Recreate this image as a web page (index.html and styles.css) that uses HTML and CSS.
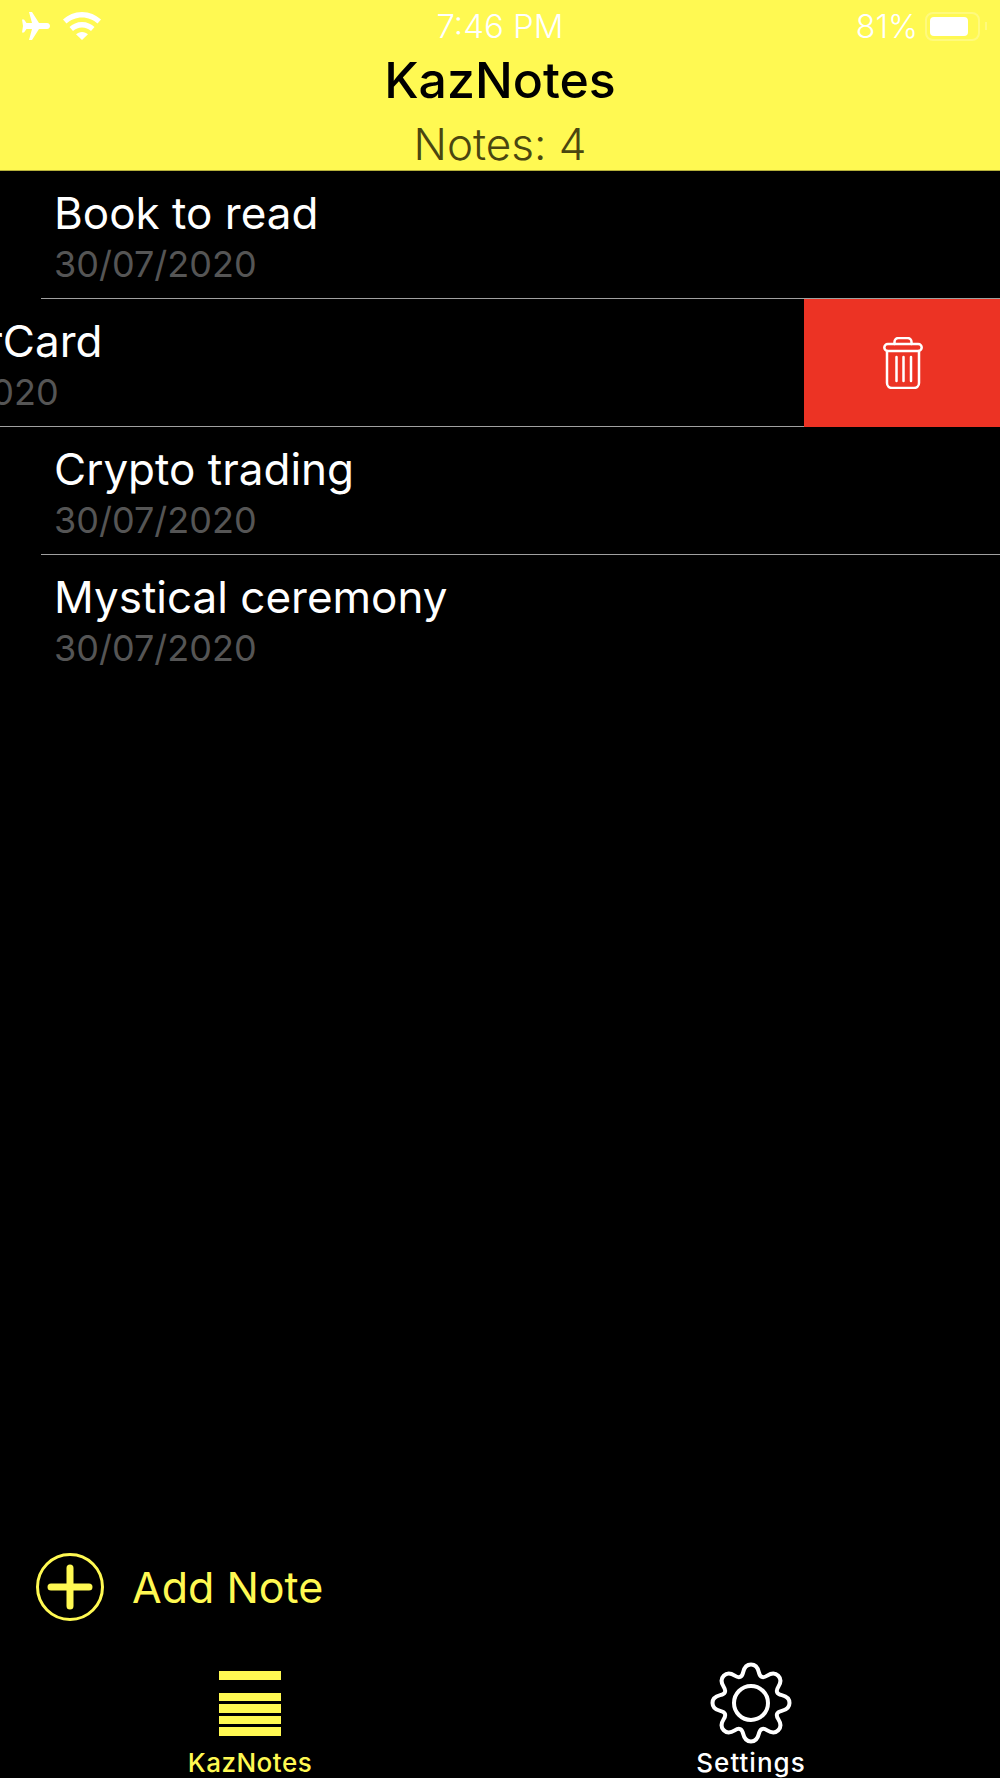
FILE: index.html
```html
<!DOCTYPE html>
<html lang="en">
<head>
    <meta charset="UTF-8">
    <meta name="viewport" content="width=device-width, initial-scale=1.0">
    <title>KazNotes</title>
    <link rel="stylesheet" href="styles.css">
</head>
<body>
    <header class="top">
        <div class="status-bar">
            <div class="status-left">
                <svg class="icon-plane" viewBox="0 0 28 28" fill="#fff"><path d="M7 0h3l7 11h8c2 0 3 1.500 3 3s-1 3-3 3h-8L10 28H7l3-11H4.500L2 20.500H0L1 14 0 7.500h2L4.500 11H10z"/></svg>
                <svg class="icon-wifi" viewBox="0 0 38 28" fill="#fff"><path d="M19 0c7.500 0 14 3 19 7.500l-3.500 4C30.500 8 25 5.500 19 5.500S7.500 8 3.500 11.500L0 7.500C5 3 11.500 0 19 0z"/><path d="M19 10c5 0 9.500 2 12.500 5l-3.500 4c-2.500-2.300-5.500-3.500-9-3.500s-6.500 1.200-9 3.500l-3.500-4C9.500 12 14 10 19 10z"/><path d="M19 20c2.500 0 4.500 1 6 2.300L19 28l-6-5.700C14.500 21 16.500 20 19 20z"/></svg>
            </div>
            <div class="status-time">7:46 PM</div>
            <div class="status-right">
                <span class="battery-pct">81%</span>
                <div class="battery"><div class="battery-fill"></div></div>
                <div class="battery-nub"></div>
            </div>
        </div>
        <h1>KazNotes</h1>
        <p class="count">Notes: 4</p>
    </header>

    <main class="notes">
        <div class="note">
            <div class="note-title">Book to read</div>
            <div class="note-date">30/07/2020</div>
        </div>
        <div class="note note-swiped">
            <div class="note-body">
                <div class="note-title">MasterCard</div>
                <div class="note-date">30/07/2020</div>
            </div>
            <div class="delete">
                <svg class="icon-trash" viewBox="0 0 40 52" fill="none" stroke="#fff" stroke-width="2.500" stroke-linejoin="round" stroke-linecap="round">
                    <path d="M11.500 7V5a4 4 0 0 1 4-4h9a4 4 0 0 1 4 4v2"/>
                    <rect x="1.300" y="7" width="37.400" height="7" rx="3.500"/>
                    <path d="M4 14v32a5 5 0 0 0 5 5h22a5 5 0 0 0 5-5V14"/>
                    <path d="M13.500 20v24M20.500 20v24M28 20v24"/>
                </svg>
            </div>
        </div>
        <div class="note">
            <div class="note-title">Crypto trading</div>
            <div class="note-date">30/07/2020</div>
        </div>
        <div class="note note-last">
            <div class="note-title">Mystical ceremony</div>
            <div class="note-date">30/07/2020</div>
        </div>
    </main>

    <div class="add-note">
        <svg class="icon-add" viewBox="0 0 70 70" fill="none" stroke="#fff952">
            <circle cx="35" cy="35" r="32.500" stroke-width="3"/>
            <path d="M35 16v38M16 35h38" stroke-width="7" stroke-linecap="round"/>
        </svg>
        <span>Add Note</span>
    </div>

    <nav class="tabs">
        <div class="tab tab-active">
            <div class="bars">
                <div class="bar bar-first"></div>
                <div class="bar"></div>
                <div class="bar"></div>
                <div class="bar"></div>
                <div class="bar"></div>
            </div>
            <span class="tab-label">KazNotes</span>
        </div>
        <div class="tab tab-settings">
            <svg class="icon-gear" viewBox="-41 -41 82 82" fill="none" stroke="#fff" stroke-width="4">
                <path d="M0 -38.500Q6.100 -38.500 7.850 -30.800Q9.600 -23.100 16.250 -27.350Q22.900 -31.600 27.250 -27.250Q31.600 -22.900 27.350 -16.250Q23.100 -9.600 30.800 -7.850Q38.500 -6.100 38.500 0Q38.500 6.100 30.800 7.850Q23.100 9.600 27.350 16.250Q31.600 22.900 27.250 27.250Q22.900 31.600 16.250 27.350Q9.600 23.100 7.850 30.800Q6.100 38.500 0 38.500Q-6.100 38.500 -7.850 30.800Q-9.600 23.100 -16.250 27.350Q-22.900 31.600 -27.250 27.250Q-31.600 22.900 -27.350 16.250Q-23.100 9.600 -30.800 7.850Q-38.500 6.100 -38.500 0Q-38.500 -6.100 -30.800 -7.850Q-23.100 -9.600 -27.350 -16.250Q-31.600 -22.900 -27.250 -27.250Q-22.900 -31.600 -16.250 -27.350Q-9.600 -23.100 -7.850 -30.800Q-6.100 -38.500 0 -38.500Z"/>
                <circle cx="0" cy="0" r="17"/>
            </svg>
            <span class="tab-label">Settings</span>
        </div>
    </nav>
</body>
</html>
```

FILE: styles.css
```css
* {
    box-sizing: border-box;
}
body {
    font-family: Inter, "Liberation Sans", sans-serif;
    margin: 0;
    height: 1778px;
    overflow: hidden;
    background-color: #000;
    color: #fff;
    display: flex;
    flex-direction: column;
}

/* top yellow area */
.top {
    height: 171px;
    flex-shrink: 0;
    background-color: #fff952;
    border-bottom: 1px solid #b5b03a;
    text-align: center;
    color: #000;
}
.status-bar {
    height: 50px;
    padding: 2px 13px 0 22px;
    display: flex;
    align-items: center;
    justify-content: space-between;
    position: relative;
    color: #fff;
}
.status-left {
    display: flex;
    align-items: center;
    gap: 13px;
}
.icon-plane {
    width: 28px;
    height: 28px;
}
.icon-wifi {
    width: 38px;
    height: 28px;
}
.status-time {
    position: absolute;
    left: 0;
    right: 0;
    font-size: 33px;
    font-weight: 300;
    line-height: 50px;
    text-align: center;
}
.status-right {
    display: flex;
    align-items: center;
}
.battery-pct {
    font-size: 32px;
    font-weight: 300;
    margin-right: 7px;
}
.battery {
    width: 55px;
    height: 29px;
    padding: 3px;
    border: 2px solid rgba(255, 255, 255, 0.25);
    border-radius: 8px;
}
.battery-fill {
    width: 38px;
    height: 100%;
    background-color: #fff;
    border-radius: 4px;
}
.battery-nub {
    width: 2px;
    height: 8px;
    margin-left: 5px;
    background-color: rgba(255, 255, 255, 0.25);
}
h1 {
    margin: 0;
    font-size: 50px;
    font-weight: 500;
    line-height: 60px;
}
.count {
    margin: 10px 0 0;
    font-size: 44px;
    font-weight: 350;
    line-height: 48px;
    color: #4a4610;
}

/* notes list */
.notes {
    flex: 1;
    overflow: hidden;
}
.note {
    height: 128px;
    margin-left: 41px;
    padding: 17px 0 0 13px;
    border-bottom: 1px solid #a0a0a0;
}
.note-last {
    border-bottom: none;
}
.note-title {
    font-size: 44px;
    line-height: 51px;
    white-space: nowrap;
}
.note-date {
    font-size: 36px;
    line-height: 50px;
    color: #555;
    white-space: nowrap;
}
.note-swiped {
    margin-left: 0;
    padding: 0;
    border-bottom: none;
    display: flex;
    overflow: hidden;
}
.note-body {
    flex: 1;
    min-width: 0;
    margin-left: -141px;
    padding-top: 17px;
    border-bottom: 1px solid #a0a0a0;
}
.note-body .note-date {
    margin-left: -3px;
}
.delete {
    width: 196px;
    flex-shrink: 0;
    padding-left: 2px;
    background-color: #ec3324;
    display: flex;
    align-items: center;
    justify-content: center;
}
.icon-trash {
    width: 40px;
    height: 52px;
}

/* add button */
.add-note {
    height: 70px;
    flex-shrink: 0;
    margin-bottom: 41px;
    padding-left: 35px;
    display: flex;
    align-items: center;
    gap: 27px;
    font-size: 43px;
    color: #fff952;
}
.icon-add {
    width: 70px;
    height: 70px;
}

/* tab bar */
.tabs {
    height: 115px;
    flex-shrink: 0;
    display: grid;
    grid-template-columns: 1fr 1fr;
}
.tab {
    display: flex;
    flex-direction: column;
    align-items: center;
}
.tab-settings {
    padding-left: 2px;
}
.tab-label {
    font-size: 26px;
    font-weight: 500;
    line-height: 30px;
    letter-spacing: 0.5px;
    margin-top: auto;
}
.tab-settings .tab-label {
    letter-spacing: 1px;
}
.tab-active {
    color: #fff952;
}
.bars {
    width: 62px;
    margin-top: 8px;
    display: flex;
    flex-direction: column;
    gap: 3px;
}
.bar {
    height: 8.500px;
    background-color: #fff952;
}
.bar-first {
    margin-bottom: 10px;
}
.icon-gear {
    width: 82px;
    height: 82px;
    margin-top: -1px;
}
```
